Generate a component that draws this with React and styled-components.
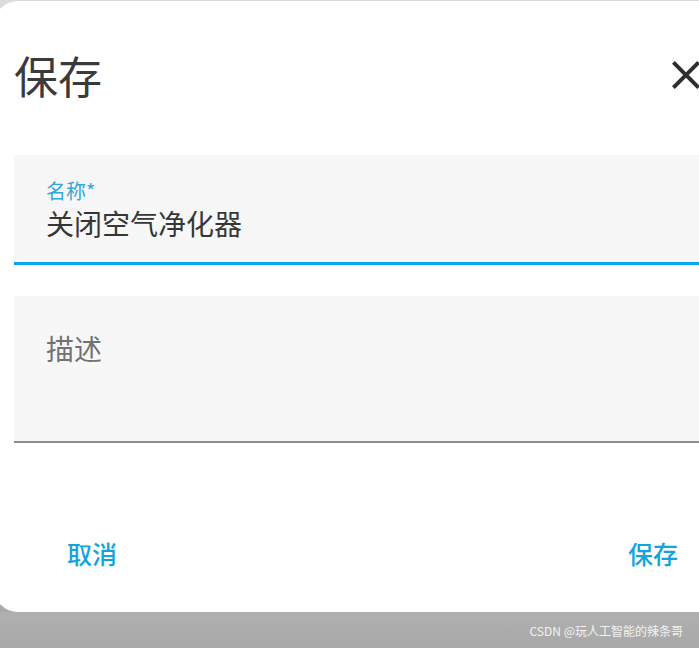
import React from "react"
import styled, { createGlobalStyle } from "styled-components"

const GlobalStyle = createGlobalStyle`
  html, body {
    margin: 0;
    padding: 0;
    overflow: hidden;
  }
  body {
    width: 699px;
    height: 648px;
    background: linear-gradient(#dcdcdc 0, #dcdcdc 30px, #aaaaaa 30px);
    font-family: "Noto Sans CJK SC", "Noto Sans", sans-serif;
  }
`

const Dialog = styled.div`
  margin: 1px 0 0 -6px;
  width: 746px;
  height: 611px;
  background: #ffffff;
  border-radius: 24px;
  box-sizing: border-box;
  padding: 0 20px;
  display: flex;
  flex-direction: column;
`

const Header = styled.div`
  display: flex;
  align-items: center;
  justify-content: space-between;
  padding-top: 48px;
  height: 52px;
  padding-right: 10px;
`

const Title = styled.h2`
  margin: 0;
  font-size: 44px;
  line-height: 52px;
  font-weight: 400;
  color: #3a3a3a;
`

const CloseButton = styled.button`
  border: none;
  background: none;
  padding: 0;
  width: 48px;
  height: 48px;
  display: flex;
  align-items: center;
  justify-content: center;
  color: #2e2e2e;
  cursor: pointer;
`

const Field = styled.div`
  margin-top: ${(p) => p.$top}px;
  background: #f7f7f7;
  box-sizing: border-box;
  height: ${(p) => p.$height}px;
  padding: ${(p) => p.$padTop}px 32px 0;
  border-bottom: ${(p) => (p.$focused ? "3px solid #0aa6ec" : "2px solid #8e8e8e")};
`

const FloatLabel = styled.div`
  font-size: 20px;
  line-height: 22px;
  color: #31a9dd;
`

const Value = styled.div`
  margin-top: 5px;
  font-size: 28px;
  line-height: 32px;
  color: #363636;
`

const Placeholder = styled.div`
  font-size: 28px;
  line-height: 34px;
  color: #727272;
`

const Actions = styled.div`
  margin-top: 77px;
  display: flex;
  justify-content: space-between;
  padding: 0 28px 0 39px;
`

const TextButton = styled.button`
  border: none;
  background: none;
  height: 65px;
  padding: 0 14px;
  font-family: inherit;
  font-size: 25px;
  font-weight: 500;
  color: #14a4dc;
  cursor: pointer;
`

const Footer = styled.div`
  height: 36px;
  display: flex;
  align-items: center;
  justify-content: flex-end;
  padding-right: 16px;
  background: linear-gradient(#b0b0b0, #a8a8a8);
`

const Watermark = styled.span`
  font-size: 12px;
  color: #f2f2f2;
`

function CloseIcon() {
  return (
    <svg width="48" height="48" viewBox="0 0 24 24" fill="currentColor">
      <path d="M19 6.41L17.59 5 12 10.59 6.41 5 5 6.41 10.59 12 5 17.59 6.41 19 12 13.41 17.59 19 19 17.59 13.41 12z" />
    </svg>
  )
}

export default function App() {
  return (
    <>
      <GlobalStyle />
      <Dialog>
        <Header>
          <Title>保存</Title>
          <CloseButton aria-label="关闭">
            <CloseIcon />
          </CloseButton>
        </Header>
        <Field $top={54} $height={110} $padTop={25} $focused>
          <FloatLabel>名称*</FloatLabel>
          <Value>关闭空气净化器</Value>
        </Field>
        <Field $top={31} $height={147} $padTop={35}>
          <Placeholder>描述</Placeholder>
        </Field>
        <Actions>
          <TextButton>取消</TextButton>
          <TextButton>保存</TextButton>
        </Actions>
      </Dialog>
      <Footer>
        <Watermark>CSDN @玩人工智能的辣条哥</Watermark>
      </Footer>
    </>
  )
}
